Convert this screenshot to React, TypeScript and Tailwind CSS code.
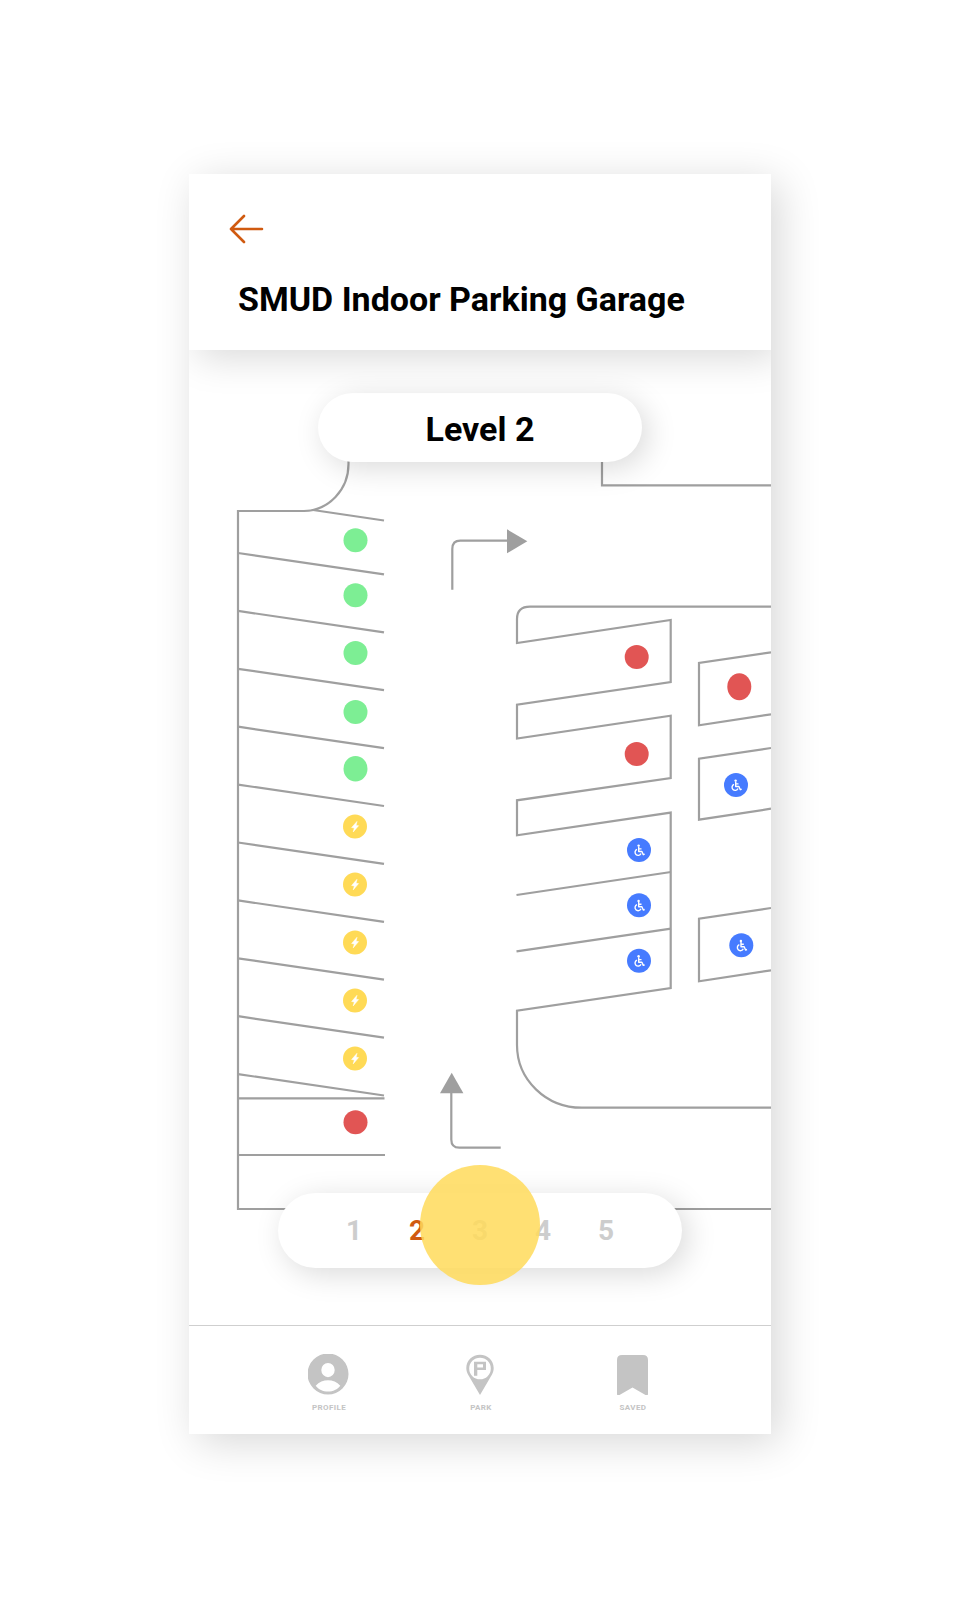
import { useState } from "react";

type SpotKind = "free" | "taken" | "ev" | "accessible";
type Spot = { x: number; y: number; kind: SpotKind; ry?: number };

const LINE = "#9f9f9f";

const SPOT_COLORS: Record<SpotKind, string> = {
  free: "#7dee94",
  taken: "#e15554",
  ev: "#ffda56",
  accessible: "#467bff",
};

const SPOT_NAMES: Record<SpotKind, string> = {
  free: "Available",
  taken: "Taken",
  ev: "EV charging",
  accessible: "Accessible",
};

const SPOTS: Spot[] = [
  { x: 166.5, y: 190.3, kind: "free" },
  { x: 166.5, y: 245.3, kind: "free" },
  { x: 166.5, y: 303, kind: "free" },
  { x: 166.5, y: 362, kind: "free" },
  { x: 166.5, y: 418.7, kind: "free", ry: 12.7 },
  { x: 166, y: 476.6, kind: "ev" },
  { x: 166, y: 534.5, kind: "ev" },
  { x: 166, y: 592.5, kind: "ev" },
  { x: 166, y: 650.5, kind: "ev" },
  { x: 166, y: 708.5, kind: "ev" },
  { x: 166.5, y: 772.3, kind: "taken" },
  { x: 447.7, y: 307, kind: "taken" },
  { x: 447.7, y: 404, kind: "taken" },
  { x: 550.3, y: 336.7, kind: "taken", ry: 13.5 },
  { x: 547, y: 435, kind: "accessible" },
  { x: 450, y: 500, kind: "accessible" },
  { x: 450, y: 555.3, kind: "accessible" },
  { x: 450, y: 610.7, kind: "accessible" },
  { x: 552.3, y: 595.3, kind: "accessible" },
];

const LEFT_STALLS = Array.from({ length: 10 }, (_, i) => 203 + i * 57.9);

function SpotMarker({ x, y, kind, ry = 12 }: Spot) {
  return (
    <g transform={`translate(${x} ${y})`}>
      <title>{SPOT_NAMES[kind]}</title>
      <ellipse rx={12} ry={ry} fill={SPOT_COLORS[kind]} />
      {kind === "ev" && (
        <path
          d="M2 -5.2L1.1 -1.2L3.6 -.9L-1.8 5.4L-.7 1.4L-3.4 1Z"
          fill="#fff"
          stroke="#fff"
          strokeWidth=".5"
          strokeLinejoin="round"
        />
      )}
      {kind === "accessible" && (
        <g fill="none" stroke="#fff" strokeWidth="1.4" strokeLinejoin="round">
          <circle cx="-.4" cy="-4.4" r="1.2" fill="#fff" stroke="none" />
          <path d="M-.3 -3.4V1.5H2.9L4.3 4.7L5.7 4.2M-.3 -1.1H2.5" />
          <path d="M-2 -.6A3.1 3.1 0 1 0 2 3.5" />
        </g>
      )}
    </g>
  );
}

function GarageMap() {
  return (
    <svg viewBox="0 0 582 975" className="block w-full" role="img" aria-label="Garage map">
      <g fill="none" stroke={LINE} strokeWidth="2.2">
        <path d="M159.5 90V114A45 47 0 0 1 115 161H49V859H582" />
        <path d="M124 160L195 170.5" />
        {LEFT_STALLS.map((y) => (
          <path key={y} d={`M49 ${y}L195 ${y + 21.4}`} />
        ))}
        <path d="M49 748.3H195.5M49 805H196" />
        <path d="M413 90V135.3H582" />
        <path d="M582 256.6H341Q328 256.6 328 269V293L481.7 270V332L328 354.7V388.5L481.7 365.7V428L328 450.3V485.3L481.7 462.6V638L328 660.7V695A64.7 62.7 0 0 0 392.7 757.7H582" />
        <path d="M327.5 545L482 522M327.5 601.3L482 578.7" />
        <path d="M582 302.3L510 313V375.3L582 364.3" />
        <path d="M582 398L510 408.7V469.7L582 458.7" />
        <path d="M582 558L510 568.7V631.3L582 620.3" />
        <path d="M263.3 239.7V199Q263.3 190.7 271.3 190.7H319" />
        <path d="M262.3 743V789.5Q262.3 797.7 270.3 797.7H311.7" />
      </g>
      <path d="M318 179.3L338.3 191.3L318 203.3Z" fill={LINE} />
      <path d="M251 743.3L262.7 722.7L274.4 743.3Z" fill={LINE} />
      {SPOTS.map((spot) => (
        <SpotMarker key={`${spot.x}-${spot.y}`} {...spot} />
      ))}
    </svg>
  );
}

function ProfileIcon() {
  return (
    <svg viewBox="0 0 41 41" className="h-[41px] w-[41px]" fill="#c4c4c4" aria-hidden="true">
      <path
        fillRule="evenodd"
        d="M20 -.5a20.5 20.5 0 1 1 0 41a20.5 20.5 0 0 1 0-41ZM20 9a6.7 7.1 0 1 0 0 14.200a6.7 7.1 0 0 0 0-14.200ZM7.700 31.700C10.500 35.400 15 37.500 20 37.500S29.500 35.400 32.300 31.700C29 28 24.500 26.200 20 26.200S11 28 7.700 31.700Z"
      />
    </svg>
  );
}

function ParkIcon() {
  return (
    <svg viewBox="0 0 28 41" className="h-[41px] w-[28px]" fill="#c4c4c4" aria-hidden="true">
      <path
        fillRule="evenodd"
        d="M14 .7C21.6 .7 27.7 6.6 27.7 14C27.7 16.5 27 18.6 26 20.5L14 41L2 20.5C1 18.6 .3 16.5 .3 14C.3 6.6 6.4 .7 14 .7ZM14 3.7A10.8 10.8 0 1 0 14 25.3A10.8 10.8 0 1 0 14 3.7Z"
      />
      <path fillRule="evenodd" d="M8 7.7H20V16H11.3V21.7H8ZM11.3 10.3V13.4H17V10.3Z" />
    </svg>
  );
}

function SavedIcon() {
  return (
    <svg viewBox="0 0 31 41" className="h-[41px] w-[31px]" fill="#c4c4c4" aria-hidden="true">
      <path d="M5 1H26Q31 1 31 6V40Q31 42 28.5 41L15.5 33.5L2.5 41Q0 42 0 40V6Q0 1 5 1Z" />
    </svg>
  );
}

const NAV_ITEMS = [
  { label: "PROFILE", Icon: ProfileIcon },
  { label: "PARK", Icon: ParkIcon },
  { label: "SAVED", Icon: SavedIcon },
];

const LEVELS = [1, 2, 3, 4, 5];

export default function App() {
  const [level, setLevel] = useState(2);

  return (
    <div className="flex justify-center bg-white py-[174px] font-[Roboto,sans-serif]">
      <main className="w-full max-w-[582px] overflow-hidden bg-white shadow-[8px_8px_40px_rgba(0,0,0,0.16)]">
        <header className="relative z-10 bg-white px-10 pt-10 pb-[31px] shadow-[8px_8px_36px_rgba(0,0,0,0.15)]">
          <button type="button" aria-label="Back" className="block">
            <svg
              viewBox="0 0 36 30"
              className="h-[30px] w-9"
              fill="none"
              stroke="#d05a10"
              strokeWidth="2.6"
              strokeLinecap="round"
              strokeLinejoin="round"
              aria-hidden="true"
            >
              <path d="M15 2L2 15L15 28M2 15H33" />
            </svg>
          </button>
          <h1 className="mt-[35px] pl-[9px] text-[34px] leading-10 font-bold text-black">
            SMUD Indoor Parking Garage
          </h1>
        </header>

        <section className="relative">
          <GarageMap />
          <h2 className="absolute inset-x-0 top-[43px] mx-auto flex h-[69px] w-[324px] items-center justify-center rounded-full bg-white pt-[2px] text-[34px] leading-10 font-bold text-black shadow-[6px_6px_30px_rgba(0,0,0,0.15)]">
            Level {level}
          </h2>
          <div className="absolute inset-x-0 bottom-[57px] mx-auto flex h-[75px] w-[404px] items-center justify-center rounded-full bg-white shadow-[6px_6px_30px_rgba(0,0,0,0.15)]">
            {LEVELS.map((n) => (
              <button
                key={n}
                type="button"
                aria-pressed={n === level}
                onClick={() => setLevel(n)}
                className={
                  n === level
                    ? "h-10 w-[63px] text-[28px] leading-10 font-bold text-[#d05a10]"
                    : "h-10 w-[63px] text-[28px] leading-10 font-bold text-[#cdcdcd]"
                }
              >
                {n}
              </button>
            ))}
          </div>
          <div className="pointer-events-none absolute inset-x-0 bottom-10 mx-auto h-[120px] w-[120px] rounded-full bg-[#ffda5a]/85" />
        </section>

        <nav className="flex justify-center border-t border-[#cfcfcf] bg-white pt-7 pb-[21px]">
          {NAV_ITEMS.map(({ label, Icon }) => (
            <a key={label} href="#" className="flex w-[152px] flex-col items-center gap-2">
              <Icon />
              <span className="pl-[2px] text-[8px] leading-[10px] font-bold tracking-wider text-[#c4c4c4]">{label}</span>
            </a>
          ))}
        </nav>
      </main>
    </div>
  );
}
